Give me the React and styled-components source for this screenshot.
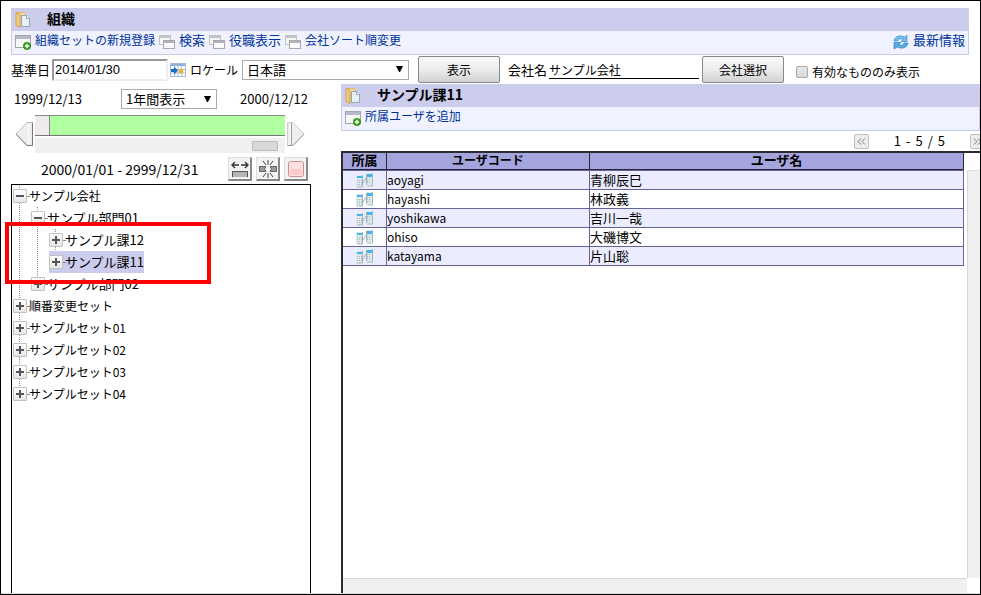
import React from "react";
import styled, { createGlobalStyle } from "styled-components";

const GlobalStyle = createGlobalStyle`
  *, *::before, *::after { box-sizing: border-box; }
  body {
    margin: 0;
    background: #fff;
    color: #000;
    font-family: "Noto Sans CJK JP", "Liberation Sans", sans-serif;
    font-size: 13px;
    line-height: 16px;
  }
  button, input, select { font: inherit; color: inherit; margin: 0; padding: 0; border-radius: 0; }
  svg { display: block; flex: none; }
`;

const Frame = styled.div`
  display: flex;
  flex-direction: column;
  min-height: 100vh;
  border: 1px solid #000;
  overflow: hidden;
`;

const Header = styled.header`
  margin: 7px 11px 0 10px;
`;

const TitleBar = styled.div`
  display: flex;
  align-items: center;
  gap: 16px;
  height: 23px;
  padding-left: 4px;
  background: #cccdec;
`;

const Title = styled.h1`
  margin: 0;
  padding-bottom: 3px;
  font-size: 14px;
  line-height: 18px;
  font-weight: 700;
`;

const Toolbar = styled.nav`
  display: flex;
  align-items: center;
  gap: 4px;
  height: 24px;
  padding: 0 3px 1px;
  background: #f0f2ff;
  border: 1px solid #c8cbf0;
  border-top: 0;
`;

const ToolLink = styled.a`
  display: flex;
  align-items: center;
  gap: 4px;
  margin-left: ${(p) => (p.$end ? "auto" : "0")};
  color: #003399;
  font-size: ${(p) => (p.$small ? "12px" : "13px")};
  white-space: nowrap;
  text-decoration: none;
`;

const LinkText = styled.span`
  padding-bottom: 4px;
`;

const FilterBar = styled.form`
  display: flex;
  align-items: center;
  height: 29px;
  padding-left: 10px;
  white-space: nowrap;
`;

const FieldLabel = styled.label`
  font-size: ${(p) => (p.$small ? "12px" : "13px")};
  margin-right: ${(p) => (p.$small ? "4px" : "2px")};
`;

const DateInput = styled.input`
  width: 116px;
  height: 22px;
  padding: 0 1px;
  border: 2px solid #999;
  border-right-color: #eee;
  border-bottom-color: #eee;
  font-family: "Liberation Sans", sans-serif;
`;

const IconButton = styled.button`
  margin: 0 4px 0 2px;
  border: 0;
  background: none;
`;

const SelectBox = styled.span`
  display: grid;
  align-items: center;
  width: ${(p) => p.$width};
  height: 20px;

  > * { grid-area: 1 / 1; }
  > svg { justify-self: end; margin-right: 6px; pointer-events: none; }
`;

const Select = styled.select`
  appearance: none;
  width: 100%;
  height: 20px;
  padding: 0 4px;
  border: 1px solid #aaa;
  background: #fff;
  line-height: 16px;
`;

const PushButton = styled.button`
  width: 82px;
  height: 27px;
  border: 1px solid #888;
  border-radius: 2px;
  background: linear-gradient(#f8f8f8, #eee 45%, #d2d2d2);
  font-size: 12px;
  margin: 0 ${(p) => p.$after} 0 ${(p) => p.$before};
`;

const CompanyInput = styled.input`
  width: 150px;
  height: 19px;
  border: 0;
  border-bottom: 1px solid #000;
  background: #fff;
  font-size: 12px;
`;

const CheckLabel = styled.label`
  display: flex;
  align-items: center;
  gap: 4px;
  padding-top: 4px;
  font-size: 12px;
`;

const CheckBox = styled.input`
  appearance: none;
  width: 12px;
  height: 12px;
  border: 1px solid #aaa;
  border-radius: 2px;
  background: linear-gradient(#e8e8e8, #d8d8d8);
  &:checked { background: #557; }
`;

const Body = styled.div`
  flex: 1;
  display: grid;
  grid-template-columns: 330px minmax(0, 1fr);
  padding-left: 10px;
  border-bottom: 1px solid #ddd;
`;

const Sidebar = styled.aside`
  position: relative;
  display: flex;
  flex-direction: column;
  width: 300px;
  padding-top: 5px;
`;

const RangeRow = styled.div`
  display: flex;
  align-items: center;
  padding: 0 3px;

  > :nth-child(2) { margin: 0 23px 0 auto; }
`;

const TimelineRow = styled.div`
  display: flex;
  align-items: center;
  gap: 2px;
  margin: 6px 0 0 4px;
`;

const ArrowButton = styled.button`
  border: 0;
  background: none;
`;

const Timeline = styled.div`
  flex: none;
  width: 250px;
`;

const TimelineBar = styled.div`
  display: flex;
  height: 21px;
  border-top: 1px solid #888;
  border-bottom: 1px solid #777;
  background: #b0ffa0;
`;

const TimelineStart = styled.div`
  width: 15px;
  border-right: 1px solid #888;
  background: #efebeb;
`;

const TimelineScroll = styled.div`
  display: flex;
  align-items: center;
  justify-content: flex-end;
  height: 15px;
  margin-top: 2px;
  padding-right: 7px;
  background: #f0f0f0;
`;

const TimelineThumb = styled.div`
  width: 26px;
  height: 10px;
  border: 1px solid #bbb;
  border-radius: 1px;
  background: #d8d8d8;
`;

const PeriodRow = styled.div`
  display: flex;
  align-items: center;
  gap: 4px;
  margin: 4px 3px 3px 30px;
`;

const Period = styled.span`
  flex: 1;
  font-size: 14px;
  white-space: nowrap;
`;

const SquareButton = styled.button`
  display: grid;
  place-items: center;
  width: 24px;
  height: 24px;
  border: 1px solid #ddd;
  border-right: 2px solid #888;
  border-bottom: 2px solid #888;
  background: #f3f3f3;
`;

const TreePanel = styled.div`
  flex: 1;
  border: 1px solid #000;
  border-bottom: 0;
  padding-left: 1px;
`;

const Branch = styled.ul`
  margin: 0;
  padding: 0 0 0 ${(p) => (p.$root ? "0" : "18px")};
  list-style: none;
  background: linear-gradient(#888 50%, transparent 50%) ${(p) => (p.$root ? "6px" : "24px")} 0 / 1px 2px repeat-y;
`;

const Leaf = styled.li`
  background: ${(p) => (p.$last ? "linear-gradient(#fff, #fff) 0 14px no-repeat" : "none")};
`;

const TreeRow = styled.div`
  display: flex;
  align-items: center;
  width: max-content;
  height: 22px;
  background: ${(p) => (p.$selected ? "#cccdec" : "transparent")};
  font-size: ${(p) => (p.$small ? "12px" : "13px")};
`;

const Toggle = styled.button`
  display: grid;
  place-items: center;
  width: 14px;
  height: 14px;
  border: 1px solid #c0c0c0;
  border-radius: 1px;
  background: linear-gradient(#fff, #e6e6e6);
`;

const Twig = styled.span`
  width: 2px;
  border-top: 1px dotted #888;
`;

const Highlight = styled.div`
  position: absolute;
  top: 138px;
  left: -6px;
  width: 206px;
  height: 62px;
  border: 4px solid #ff0000;
  pointer-events: none;
`;

const Detail = styled.main`
  display: flex;
  flex-direction: column;
  min-width: 0;
`;

const Pager = styled.div`
  display: flex;
  align-items: center;
  justify-content: flex-end;
  height: 20px;
  margin-right: -5px;
`;

const PageText = styled.span`
  display: flex;
  gap: 5px;
  margin: 0 25px;
`;

const PageButton = styled.button`
  display: grid;
  place-items: center;
  width: 15px;
  height: 15px;
  border: 1px solid #c0c0c0;
  border-radius: 2px;
  background: #ededed;
`;

const GridPanel = styled.section`
  flex: 1;
  display: grid;
  grid-template-columns: minmax(0, 1fr) 13px;
  grid-template-rows: minmax(0, 1fr) 15px;
  border-top: 2px solid #2c2c30;
  border-left: 2px solid #2c2c30;
`;

const TableArea = styled.div`
  padding-right: 3px;
`;

const UserTable = styled.table`
  width: 100%;
  table-layout: fixed;
  border-collapse: separate;
  border-spacing: 0;
`;

const HeadCell = styled.th`
  width: ${(p) => p.$width || "auto"};
  height: 17px;
  padding: 0 0 2px;
  border-right: 1px solid #26263a;
  border-bottom: 1px solid #26263a;
  background: #a4a5dc;
  font-size: ${(p) => (p.$small ? "12px" : "13px")};
  line-height: 14px;
`;

const Row = styled.tr`
  background: #fff;
  &:nth-child(odd) { background: #ebedff; }
  &:first-child > td { border-top: 1px solid #63639c; height: 20px; }
`;

const Cell = styled.td`
  height: 19px;
  padding: 0 0 1px;
  border-right: 1px solid #63639c;
  border-bottom: 1px solid #63639c;
  font-size: ${(p) => (p.$small ? "12px" : "13px")};
  line-height: 16px;

  > svg { margin: 0 auto; }
`;

const VerticalScroll = styled.div`
  margin-top: 17px;
  border-left: 1px solid #d8d8d8;
  border-top: 1px solid #ddd;
  background: #f0f0f0;
`;

const HorizontalScroll = styled.div`
  border-top: 1px solid #d8d8d8;
  background: #f0f0f0;
`;

const FolderIcon = () => (
  <svg width="16" height="16" viewBox="0 0 16 16" aria-hidden="true">
    <path d="M1.500.500h8l1 1v12h-9z" fill="#f7dc97" stroke="#dfb46c" />
    <path d="M1 .500 5 2.500v13L1 13.500z" fill="#f1ca7d" stroke="#cfa052" />
    <path d="M6.500 3.500h5l3 3v8h-8z" fill="#e4f0f4" stroke="#8fa9b0" />
    <path d="M11.500 3.500v3h3" fill="#fff" stroke="#8fa9b0" />
  </svg>
);

const AddWindowIcon = () => (
  <svg width="16" height="16" viewBox="0 0 16 16" aria-hidden="true">
    <rect x="0.5" y="1.5" width="15" height="12" fill="#f7f7f8" stroke="#a5a5ad" />
    <path d="M1 2h14v3H1z" fill="#b9b9cc" />
    <circle cx="12" cy="12" r="3.7" fill="#32a014" stroke="#1f7a08" strokeWidth="0.5" />
    <path d="M12 9.8v4.400M9.800 12h4.400" stroke="#fff" strokeWidth="1.4" />
  </svg>
);

const WindowsIcon = () => (
  <svg width="16" height="16" viewBox="0 0 16 16" aria-hidden="true">
    <rect x="0.5" y="1.5" width="11" height="9" fill="#f6f6f7" stroke="#c2c2c6" />
    <path d="M1 2h10v2H1z" fill="#c4c4ca" />
    <rect x="4.5" y="6.5" width="11" height="8" fill="#fafafa" stroke="#a8a8ae" />
    <path d="M5 7h10v2H5z" fill="#b2b2ba" />
  </svg>
);

const RefreshIcon = () => (
  <svg width="16" height="16" viewBox="0 0 16 16" aria-hidden="true">
    <path d="M1 7C1.500 2.500 7 .5 11.500 3L14 1v6.500H8l2-2C7.500 4 5.500 5 5 7z" fill="#74bdea" stroke="#3d8fca" strokeWidth="0.700" />
    <path d="M15 9c-.5 4.500-6 6.500-10.500 4L1 15V8.500h7l-2 2c2.500 1.500 4.500.5 5-1.500z" fill="#58ace3" stroke="#2c7fbf" strokeWidth="0.700" />
  </svg>
);

const CalendarIcon = () => (
  <svg width="16" height="14" viewBox="0 0 16 14" aria-hidden="true">
    <rect x="0.5" y="0.5" width="15" height="13" fill="#fff" stroke="#a5bdd8" />
    <path d="M1 1h14v2H1z" fill="#8fb1dc" />
    <path d="M1 6.500h14M1 10h14M4.500 3v10M8 3v10M11.500 3v10" stroke="#a8bdd2" />
    <rect x="9" y="6" width="4" height="4" fill="#ffa91c" />
    <path d="M1 6h3V3.500L8 7.500l-4 4V9H1z" fill="#166dcc" />
  </svg>
);

const CaretIcon = () => (
  <svg width="7" height="7" viewBox="0 0 7 7" aria-hidden="true">
    <path d="M0 0h7L4 6H3z" fill="#000" />
  </svg>
);

const SideArrow = ({ right }) => (
  <svg width="18" height="24" viewBox="0 0 18 24" aria-hidden="true">
    {right ? (
      <>
        <path d="M.5.500H6L17 12 6 23.500H.5z" fill="#eee" stroke="#ccc" />
        <path d="M17 12 6 23.500H.5M4.500 1v22" fill="none" stroke="#999" />
        <path d="M3.500 2v20" stroke="#fff" />
      </>
    ) : (
      <>
        <path d="M17.500.500H12L1 12l11 11.500h5.500z" fill="#eee" stroke="#bbb" />
        <path d="M17.500.500v23H12L1 12" fill="none" stroke="#777" />
        <path d="M13.500 2v20" stroke="#fff" />
      </>
    )}
  </svg>
);

const StretchIcon = () => (
  <svg width="18" height="18" viewBox="0 0 18 18" aria-hidden="true">
    <path d="M1 5h7M10 5h7M4 2 1 5l3 3M14 2l3 3-3 3" fill="none" stroke="#333" strokeWidth="1.400" />
    <rect x="1" y="11" width="16" height="6" fill="#b5b5b5" />
    <path d="M1.500 17v-5.500h15V17" fill="none" stroke="#555" />
  </svg>
);

const SplitIcon = () => (
  <svg width="18" height="18" viewBox="0 0 18 18" aria-hidden="true">
    <path d="M.5 6.500H7L5.500 9 7 11.500H.5zM17.500 6.500H11L12.500 9 11 11.500h6.500z" fill="#999" stroke="#666" />
    <path d="M9 0v5M9 13v5M4 1l3 4M14 1l-3 4M4 17l3-4M14 17l-3-4" stroke="#444" />
  </svg>
);

const StopIcon = () => (
  <svg width="16" height="16" viewBox="0 0 16 16" aria-hidden="true">
    <rect x="0.500" y="0.500" width="15" height="15" rx="2" fill="#ffe0e0" stroke="#c89090" />
    <path d="M2 8h12v6H2z" fill="#ffc9c9" />
  </svg>
);

const ToggleIcon = ({ open }) => (
  <svg width="8" height="8" viewBox="0 0 8 8" aria-hidden="true">
    <path d={open ? "M0 4h8" : "M0 4h8M4 0v8"} stroke="#555" strokeWidth="2" />
  </svg>
);

const ChevronsIcon = ({ right }) => (
  <svg width="9" height="7" viewBox="0 0 9 7" aria-hidden="true">
    <path d={right ? "M1 .5l3 3-3 3M5 .5l3 3-3 3" : "M4 .5l-3 3 3 3M8 .5l-3 3 3 3"} fill="none" stroke="#777" />
  </svg>
);

const MembershipIcon = () => (
  <svg width="17" height="16" viewBox="0 0 17 16" aria-hidden="true">
    <rect x="0" y="3" width="7" height="12" fill="#e0eaeb" />
    <rect x="10" y="1" width="6" height="12" fill="#e0eaeb" />
    <path d="M1 4h5v2H1zM11 2h5v3h-5z" fill="#3fb6f2" />
    <path d="M1 8.500h5M1 10.500h5M1 12.500h5M11 6.500h4M11 8.500h4M11 10.500h4" stroke="#a3b9bc" strokeDasharray="1 1" />
    <path d="M6.500 3v12H1M16.500 1v13H11M6.500 12l4-6.500M10.500 2v11" fill="none" stroke="#9fb5b7" />
  </svg>
);

const tree = [
  {
    label: "サンプル会社", small: true, open: true,
    children: [
      {
        label: "サンプル部門01", open: true,
        children: [{ label: "サンプル課12" }, { label: "サンプル課11", selected: true }],
      },
      { label: "サンプル部門02" },
    ],
  },
  { label: "順番変更セット", small: true },
  { label: "サンプルセット01", small: true },
  { label: "サンプルセット02", small: true },
  { label: "サンプルセット03", small: true },
  { label: "サンプルセット04", small: true },
];

const users = [
  ["aoyagi", "青柳辰巳"],
  ["hayashi", "林政義"],
  ["yoshikawa", "吉川一哉"],
  ["ohiso", "大磯博文"],
  ["katayama", "片山聡"],
];

const Tree = ({ nodes, root }) => (
  <Branch $root={root}>
    {nodes.map((node, i) => (
      <Leaf key={node.label} $last={i === nodes.length - 1}>
        <TreeRow $small={node.small} $selected={node.selected}>
          <Toggle type="button" aria-label={node.label} aria-expanded={!!node.open}>
            <ToggleIcon open={node.open} />
          </Toggle>
          <Twig />
          {node.label}
        </TreeRow>
        {node.children && <Tree nodes={node.children} />}
      </Leaf>
    ))}
  </Branch>
);

export default function App() {
  return (
    <Frame>
      <GlobalStyle />
      <Header>
        <TitleBar>
          <FolderIcon />
          <Title>組織</Title>
        </TitleBar>
        <Toolbar>
          <ToolLink href="#new" $small><AddWindowIcon /><LinkText>組織セットの新規登録</LinkText></ToolLink>
          <ToolLink href="#search"><WindowsIcon /><LinkText>検索</LinkText></ToolLink>
          <ToolLink href="#posts"><WindowsIcon /><LinkText>役職表示</LinkText></ToolLink>
          <ToolLink href="#sort" $small><WindowsIcon /><LinkText>会社ソート順変更</LinkText></ToolLink>
          <ToolLink href="#latest" $end><RefreshIcon /><LinkText>最新情報</LinkText></ToolLink>
        </Toolbar>
      </Header>

      <FilterBar onSubmit={(e) => e.preventDefault()}>
        <FieldLabel htmlFor="base-date">基準日</FieldLabel>
        <DateInput id="base-date" defaultValue="2014/01/30" />
        <IconButton type="button" aria-label="カレンダー"><CalendarIcon /></IconButton>
        <FieldLabel htmlFor="locale" $small>ロケール</FieldLabel>
        <SelectBox $width="167px">
          <Select id="locale" defaultValue="ja"><option value="ja">日本語</option></Select>
          <CaretIcon />
        </SelectBox>
        <PushButton type="submit" $before="9px" $after="8px">表示</PushButton>
        <FieldLabel htmlFor="company">会社名</FieldLabel>
        <CompanyInput id="company" defaultValue="サンプル会社" />
        <PushButton type="button" $before="3px" $after="12px">会社選択</PushButton>
        <CheckLabel><CheckBox type="checkbox" />有効なもののみ表示</CheckLabel>
      </FilterBar>

      <Body>
        <Sidebar>
          <RangeRow>
            <span>1999/12/13</span>
            <SelectBox $width="96px">
              <Select aria-label="表示期間" defaultValue="1"><option value="1">1年間表示</option></Select>
              <CaretIcon />
            </SelectBox>
            <span>2000/12/12</span>
          </RangeRow>
          <TimelineRow>
            <ArrowButton type="button" aria-label="前へ"><SideArrow /></ArrowButton>
            <Timeline>
              <TimelineBar><TimelineStart /></TimelineBar>
              <TimelineScroll><TimelineThumb /></TimelineScroll>
            </Timeline>
            <ArrowButton type="button" aria-label="次へ"><SideArrow right /></ArrowButton>
          </TimelineRow>
          <PeriodRow>
            <Period>2000/01/01 - 2999/12/31</Period>
            <SquareButton type="button" aria-label="期間変更"><StretchIcon /></SquareButton>
            <SquareButton type="button" aria-label="分割"><SplitIcon /></SquareButton>
            <SquareButton type="button" aria-label="削除"><StopIcon /></SquareButton>
          </PeriodRow>
          <TreePanel>
            <Tree nodes={tree} root />
          </TreePanel>
          <Highlight />
        </Sidebar>

        <Detail>
          <TitleBar>
            <FolderIcon />
            <Title as="h2">サンプル課11</Title>
          </TitleBar>
          <Toolbar>
            <ToolLink href="#add-user" $small><AddWindowIcon /><LinkText>所属ユーザを追加</LinkText></ToolLink>
          </Toolbar>
          <Pager>
            <PageButton type="button" aria-label="前のページ"><ChevronsIcon /></PageButton>
            <PageText><span>1</span><span>-</span><span>5</span><span>/</span><span>5</span></PageText>
            <PageButton type="button" aria-label="次のページ"><ChevronsIcon right /></PageButton>
          </Pager>
          <GridPanel>
            <TableArea>
              <UserTable>
                <thead>
                  <tr>
                    <HeadCell $width="44px">所属</HeadCell>
                    <HeadCell $width="203px" $small>ユーザコード</HeadCell>
                    <HeadCell>ユーザ名</HeadCell>
                  </tr>
                </thead>
                <tbody>
                  {users.map(([code, name]) => (
                    <Row key={code}>
                      <Cell><MembershipIcon /></Cell>
                      <Cell $small>{code}</Cell>
                      <Cell>{name}</Cell>
                    </Row>
                  ))}
                </tbody>
              </UserTable>
            </TableArea>
            <VerticalScroll />
            <HorizontalScroll />
          </GridPanel>
        </Detail>
      </Body>
    </Frame>
  );
}
